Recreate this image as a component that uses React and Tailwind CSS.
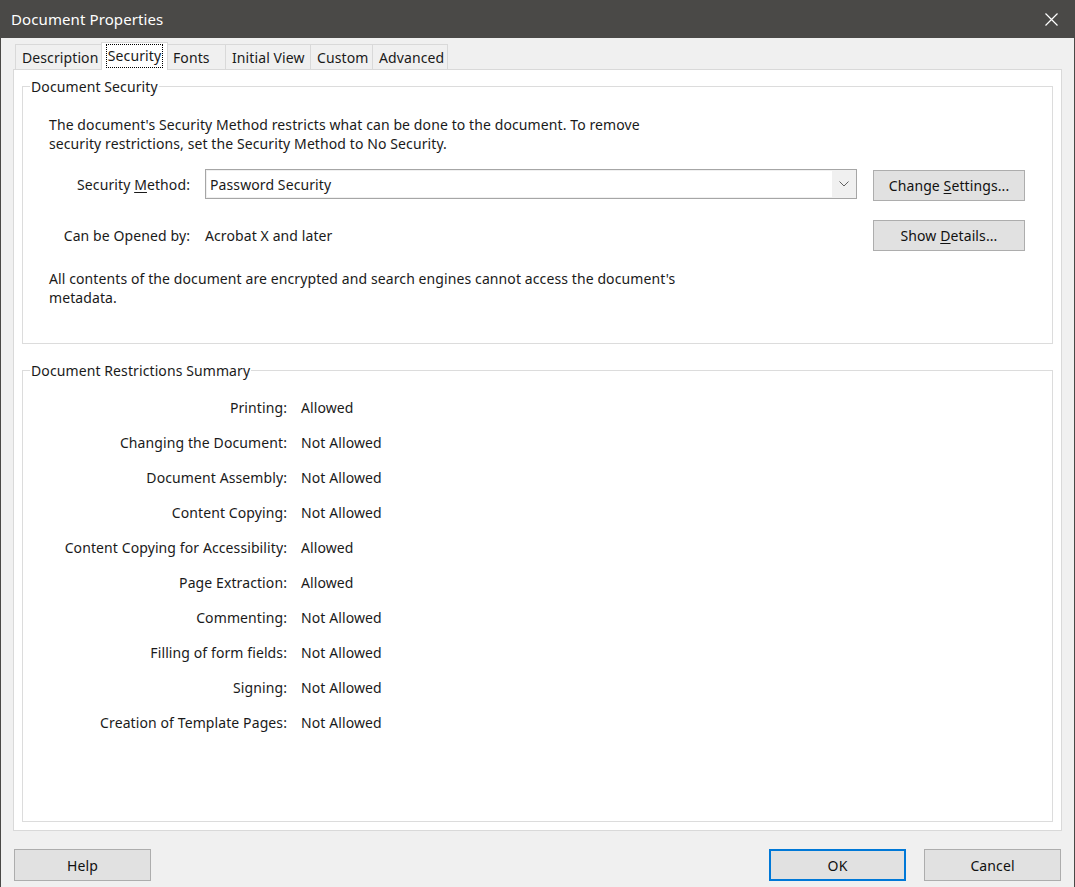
const FONT = "font-['Segoe_UI','Noto_Sans',sans-serif]";

const TABS = [
  { label: "Description", w: "w-[87px]" },
  { label: "Security", w: "w-[67px]", active: true },
  { label: "Fonts", w: "w-[60px]" },
  { label: "Initial View", w: "w-[86px]" },
  { label: "Custom", w: "w-[63px]" },
  { label: "Advanced", w: "w-[76px]" }
];

const RESTRICTIONS = [
  ["Printing:", "Allowed"],
  ["Changing the Document:", "Not Allowed"],
  ["Document Assembly:", "Not Allowed"],
  ["Content Copying:", "Not Allowed"],
  ["Content Copying for Accessibility:", "Allowed"],
  ["Page Extraction:", "Allowed"],
  ["Commenting:", "Not Allowed"],
  ["Filling of form fields:", "Not Allowed"],
  ["Signing:", "Not Allowed"],
  ["Creation of Template Pages:", "Not Allowed"]
];

function Button({ children, className = "", primary }) {
  return (
    <button
      type="button"
      className={`flex items-center justify-center bg-[#e1e1e1] text-[14px] text-[#111] ${
        primary ? "border-2 border-[#0078d7]" : "border border-[#adadad]"
      } ${className}`}
    >
      {children}
    </button>
  );
}

function Tab({ label, w, active }) {
  if (active) {
    return (
      <div
        className={`${w} relative z-10 -mx-[1px] mb-[-1px] flex h-[28px] items-start justify-center border border-b-0 border-[#d9d9d9] bg-white pt-[1px]`}
      >
        <span className="border border-dotted border-black px-[1px] leading-[22px]">{label}</span>
      </div>
    );
  }
  return (
    <div
      className={`${w} -ml-[1px] flex h-[25px] items-center border border-b-0 border-[#d9d9d9] bg-[#f0f0f0] pl-[6px] first:ml-0`}
    >
      {label}
    </div>
  );
}

export default function App() {
  return (
    <div
      className={`${FONT} flex h-[887px] w-[1075px] flex-col border-x border-[#4a4947] bg-[#f0f0f0] text-[14px] leading-[19px] tracking-[0.1px] text-[#1a1a1a]`}
    >
      {/* title bar */}
      <div className="flex h-[38px] shrink-0 items-center justify-between bg-[#4a4947] pl-[10px] pr-[16px] text-[15px] text-white">
        <span>Document Properties</span>
        <svg width="13" height="13" viewBox="0 0 13 13" aria-hidden="true">
          <path d="M0.5 0.5 L12.5 12.5 M12.5 0.5 L0.5 12.5" stroke="white" strokeWidth="1.2" />
        </svg>
      </div>

      <div className="flex flex-1 flex-col px-[12px]">
        {/* tabs */}
        <div className="flex h-[31px] items-end pl-[2px]">
          {TABS.map((t) => (
            <Tab key={t.label} {...t} />
          ))}
        </div>

        {/* tab panel */}
        <div className="flex h-[762px] flex-col border border-[#d9d9d9] bg-white px-[8px] pb-[8px] pt-[7px]">
          <fieldset className="border border-[#dcdcdc]">
            <legend className="ml-[7px] px-[1px]">Document Security</legend>
            <div className="pb-[36px] pl-[26px] pr-[27px] pt-[19px]">
              <p>
                The document's Security Method restricts what can be done to the document. To remove
                <br />
                security restrictions, set the Security Method to No Security.
              </p>

              <div className="mt-[16px] flex items-start">
                <span className="mt-[6px] w-[141px] text-right">
                  Security <u className="underline-offset-2">M</u>ethod:
                </span>
                <div className="ml-[15px] flex h-[30px] flex-1 border border-[#a6a6a6] bg-[#f0f0f0] p-[1px]">
                  <div className="flex flex-1 items-center bg-white pl-[3px]">Password Security</div>
                  <div className="flex w-[23px] items-center justify-center">
                    <svg width="10" height="6" viewBox="0 0 10 6" aria-hidden="true">
                      <path d="M0.5 0.5 L5 5 L9.5 0.5" fill="none" stroke="#606060" strokeWidth="1" />
                    </svg>
                  </div>
                </div>
                <Button className="ml-[16px] mt-[1px] h-[31px] w-[152px]">
                  Change&nbsp;<u className="underline-offset-2">S</u>ettings...
                </Button>
              </div>

              <div className="mt-[19px] flex h-[31px] items-center">
                <span className="w-[141px] text-right">Can be Opened by:</span>
                <span className="ml-[15px] flex-1">Acrobat X and later</span>
                <Button className="h-[31px] w-[152px]">
                  Show&nbsp;<u className="underline-offset-2">D</u>etails...
                </Button>
              </div>

              <p className="mt-[18px]">
                All contents of the document are encrypted and search engines cannot access the document's
                <br />
                metadata.
              </p>
            </div>
          </fieldset>

          <fieldset className="mt-[17px] flex-1 border border-[#dcdcdc] pt-[18px]">
            <legend className="ml-[7px] px-[1px]">Document Restrictions Summary</legend>
            <div className="flex flex-col gap-[16px]">
              {RESTRICTIONS.map(([label, value]) => (
                <div key={label} className="flex">
                  <span className="w-[264px] text-right">{label}</span>
                  <span className="ml-[14px]">{value}</span>
                </div>
              ))}
            </div>
          </fieldset>
        </div>

        {/* footer buttons */}
        <div className="mt-[18px] flex items-start pl-[1px]">
          <Button className="h-[32px] w-[137px]">Help</Button>
          <div className="flex-1" />
          <Button primary className="h-[32px] w-[137px]">
            OK
          </Button>
          <Button className="ml-[18px] mr-[1px] h-[32px] w-[137px]">Cancel</Button>
        </div>
      </div>
    </div>
  );
}
